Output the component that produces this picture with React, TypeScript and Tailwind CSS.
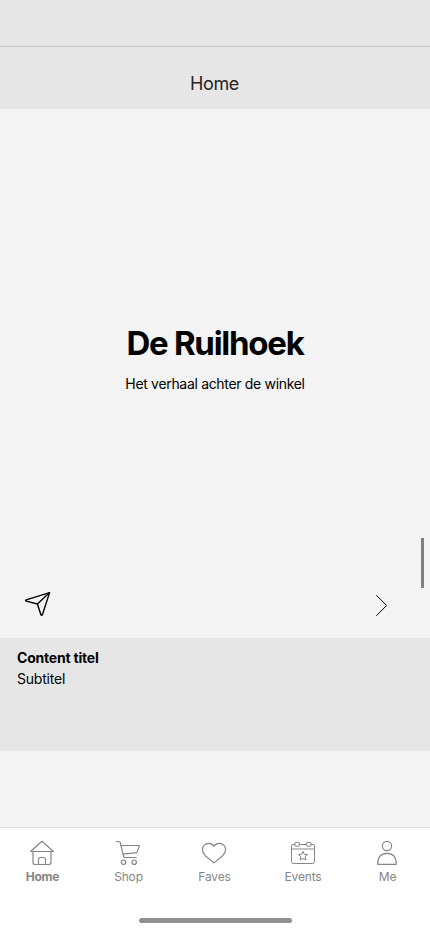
import React from 'react';

interface IconProps {
  className?: string;
}

interface Tab {
  id: string;
  label: string;
  icon: React.FC<IconProps>;
}

const HomeIcon: React.FC<IconProps> = ({ className }) => (
  <svg className={className} viewBox="0 0 28 28" fill="none" stroke="currentColor" strokeWidth="1.2" strokeLinejoin="round">
    <path d="M14 2.3 25.5 12.5H2.5Z" />
    <path d="M5 12.5V23.2Q5 25.5 7.3 25.5H20.7Q23 25.5 23 23.2V12.5" />
    <path d="M10.5 25.5V20.5Q10.5 18.5 12.5 18.5H15.5Q17.5 18.5 17.5 20.5V25.5" />
  </svg>
);

const ShopIcon: React.FC<IconProps> = ({ className }) => (
  <svg className={className} viewBox="0 0 28 28" fill="none" stroke="currentColor" strokeWidth="1.2" strokeLinejoin="round" strokeLinecap="round">
    <path d="M2.2 2.5H4.6Q5.9 2.5 6.3 3.9L9.9 18.5H22.3" />
    <path d="M7 6.5H25.4L22.8 13.6 9 15.1" />
    <circle cx="9.5" cy="23.2" r="2.2" />
    <circle cx="20.2" cy="23.2" r="2.2" />
  </svg>
);

const HeartIcon: React.FC<IconProps> = ({ className }) => (
  <svg className={className} viewBox="0 0 28 28" fill="none" stroke="currentColor" strokeWidth="1.2" strokeLinejoin="round">
    <path d="M14 7.3C12.6 5.1 10.8 4.4 8.6 4.4 5.1 4.4 2.4 7.1 2.4 10.6 2.4 13.1 3.6 15 5.3 16.7L14 23.9 22.7 16.7C24.4 15 25.6 13.1 25.6 10.6 25.6 7.1 22.9 4.4 19.4 4.4 17.2 4.4 15.4 5.1 14 7.3Z" />
  </svg>
);

const EventsIcon: React.FC<IconProps> = ({ className }) => (
  <svg className={className} viewBox="0 0 28 28" fill="none" stroke="currentColor" strokeLinejoin="round">
    <path d="M6 5.5H3.9Q2.5 5.5 2.5 6.9V22.7Q2.5 24.5 4.3 24.5H23.7Q25.5 24.5 25.5 22.7V6.9Q25.5 5.5 24.1 5.5H22M10 5.5H18" />
    <path d="M2.5 10H25.5" strokeWidth="1.4" strokeOpacity="0.7" />
    <rect x="6" y="3.4" width="4.3" height="3.8" rx="0.5" />
    <rect x="17.7" y="3.4" width="4.3" height="3.8" rx="0.5" />
    <path d="M14 12.4 15.3 15.3 18.5 15.6 16.1 17.8 16.8 21 14 19.4 11.2 21 11.9 17.8 9.5 15.6 12.7 15.3Z" />
  </svg>
);

const MeIcon: React.FC<IconProps> = ({ className }) => (
  <svg className={className} viewBox="0 0 28 28" fill="none" stroke="currentColor" strokeWidth="1.2" strokeLinejoin="round">
    <circle cx="14" cy="7" r="4.6" />
    <path d="M4.8 25.4C4.5 18.2 7.8 14.4 14 14.4S23.5 18.2 23.2 25.4Z" />
  </svg>
);

const tabs: Tab[] = [
  { id: 'home', label: 'Home', icon: HomeIcon },
  { id: 'shop', label: 'Shop', icon: ShopIcon },
  { id: 'faves', label: 'Faves', icon: HeartIcon },
  { id: 'events', label: 'Events', icon: EventsIcon },
  { id: 'me', label: 'Me', icon: MeIcon },
];

const TabBar: React.FC<{ activeTab: string }> = ({ activeTab }) => (
  <nav className="h-[105px] shrink-0 border-t border-[#dfdfdf] bg-white flex flex-col items-center justify-between pb-[9px]">
    <div className="w-full grid grid-cols-[85px_87px_85px_92px_77px] pt-[11px]">
      {tabs.map(({ id, label, icon: Icon }) => (
        <button key={id} className="flex flex-col items-center text-[#858585]">
          <Icon className="size-7 mr-px" />
          <span
            className={`text-xs leading-4 mt-0.5 ${
              id === activeTab ? 'font-bold tracking-[-0.2px]' : 'font-normal tracking-[-0.15px]'
            }`}
          >
            {label}
          </span>
        </button>
      ))}
    </div>
    <div className="w-[153px] h-[5px] rounded-full bg-[#919191]" />
  </nav>
);

export default function App() {
  return (
    <div className="h-screen w-full flex flex-col overflow-hidden bg-[#f3f3f3] font-['Inter',sans-serif] text-black">
      <header className="h-[109px] shrink-0 bg-[#e6e6e6] flex flex-col">
        <div className="h-[47px] border-b border-[#c6c6c6]" />
        <h1 className="pt-[25px] pr-px text-center text-lg leading-6 tracking-[-0.35px] text-[#242424]">Home</h1>
      </header>

      <main className="flex-1 flex flex-col">
        <section className="relative h-[529px] flex flex-col justify-between pt-[212px] pb-5">
          <div className="text-center">
            <h2 className="text-[33px] leading-[44px] font-bold tracking-[-1.25px]">De Ruilhoek</h2>
            <p className="mt-[9px] text-sm leading-5 tracking-[-0.32px]">Het verhaal achter de winkel</p>
          </div>

          <div className="flex items-center justify-between pl-6 pr-10">
            <button aria-label="Share">
              <svg className="size-7" viewBox="0 0 28 28" fill="none" stroke="currentColor" strokeWidth="1.4" strokeLinejoin="round">
                <path d="M25.6 2.6 2.2 9.9Q1.1 10.6 2.2 11.1L13.4 14 16.9 24.7Q17.7 26 18.4 24.7Z" />
                <path d="M25.6 2.6 13.4 14" />
              </svg>
            </button>
            <button aria-label="Next">
              <svg className="w-4 h-6" viewBox="0 0 16 24" fill="none" stroke="currentColor">
                <path d="M2.3 3.2 12.6 13.5 2.3 23.8" />
              </svg>
            </button>
          </div>

          {/* Scroll indicator */}
          <div className="absolute right-1.5 top-[429px] w-[3px] h-[50px] bg-[#808080]" />
        </section>

        <section className="h-[113px] bg-[#e6e6e6] px-[17px] pt-2.5">
          <h3 className="text-sm leading-5 font-bold tracking-[-0.2px]">Content titel</h3>
          <p className="text-sm leading-5 mt-px tracking-[-0.2px]">Subtitel</p>
        </section>
      </main>

      <TabBar activeTab="home" />
    </div>
  );
}
